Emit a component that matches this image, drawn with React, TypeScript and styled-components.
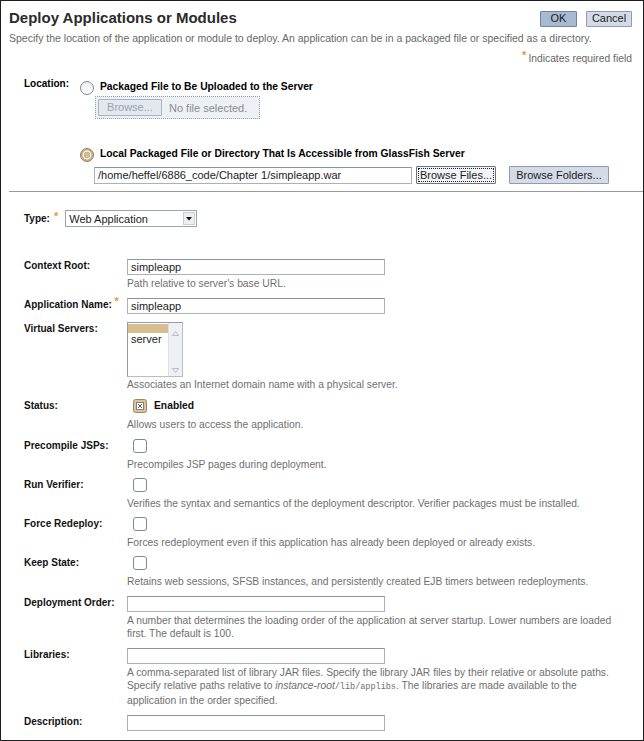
import React from 'react';
import styled, { createGlobalStyle, css } from 'styled-components';

const GlobalStyle = createGlobalStyle`
  html, body { margin: 0; padding: 0; background: #fff; }
  body { font-family: "Liberation Sans", Arial, sans-serif; }
  * { box-sizing: border-box; }
`;

const Page = styled.div`
  width: 644px;
  height: 741px;
  border: 1px solid #1e1e1e;
  background: #fff;
  overflow: hidden;
  color: #000;
  font-family: "Liberation Sans", Arial, sans-serif;
`;

const Header = styled.header`
  padding: 6px 11px 0 8px;
`;

const TitleRow = styled.div`
  display: flex;
  align-items: center;
  justify-content: space-between;
  height: 22px;
`;

const Title = styled.h1`
  margin: 0;
  font-size: 15px;
  line-height: 18px;
  font-weight: bold;
  color: #2b2b2b;
`;

const Actions = styled.div`
  display: flex;
  gap: 9px;
  margin-top: 1px;
`;

type Tone = 'primary' | 'plain' | 'focused' | 'disabled';

const Button = styled.button<{ $tone?: Tone; $w: number; $h?: number; $ml?: number }>`
  width: ${p => p.$w}px;
  height: ${p => p.$h ?? 16}px;
  margin-left: ${p => p.$ml ?? 0}px;
  padding: 0;
  font-family: "Liberation Sans", Arial, sans-serif;
  font-size: 11px;
  line-height: 1;
  color: #1c1c1c;
  border: 1px solid #8e9bb0;
  border-radius: 1px;
  background: #d4dbe6;
  ${p => p.$tone === 'primary' && css`
    background: #a8b9d2;
    border-color: #70849f;
  `}
  ${p => p.$tone === 'focused' && css`
    background: #f2f4f7;
    border: 1px solid #6d7480;
    outline: 1px dotted #222;
    outline-offset: -3px;
  `}
  ${p => p.$tone === 'disabled' && css`
    background: #e3e7ee;
    border-color: #aab3c0;
    color: #9ba2ad;
  `}
`;

const Subtitle = styled.p`
  margin: 3px 0 0;
  font-size: 10.5px;
  line-height: 13px;
  color: #686868;
`;

const RequiredNote = styled.p`
  margin: 7px 0 0;
  text-align: right;
  font-size: 10.3px;
  line-height: 13px;
  color: #686868;
`;

const Star = styled.span<{ $size?: number; $ml?: number }>`
  color: #e39a35;
  font-weight: bold;
  font-size: ${p => p.$size ?? 11}px;
  position: relative;
  top: -3px;
  margin-left: ${p => p.$ml ?? 0}px;
  margin-right: 2px;
`;

const LocationSection = styled.section`
  display: grid;
  grid-template-columns: 56px 1fr;
  margin-top: 15px;
  padding-left: 23px;
`;

const SectionLabel = styled.div`
  font-size: 10px;
  font-weight: bold;
  line-height: 13px;
  margin-top: -3px;
`;

const Options = styled.div`
  display: flex;
  flex-direction: column;
`;

const Option = styled.label<{ $top?: number }>`
  display: flex;
  align-items: flex-start;
  gap: 6px;
  margin-top: ${p => p.$top ?? 0}px;
  font-size: 10.3px;
  font-weight: bold;
  line-height: 13px;
`;

const RadioIcon = styled.svg`
  flex: none;
  margin-top: 1px;
`;

const FileBox = styled.div`
  display: flex;
  align-items: center;
  gap: 7px;
  width: 165px;
  height: 23px;
  margin: 1px 0 0 15px;
  padding: 0 2px;
  border: 1px dotted #8f9fb6;
  background: #edf0f5;
  font-size: 11px;
  color: #8c8c8c;
`;

const PathRow = styled.div`
  display: flex;
  align-items: center;
  margin: 4px 0 0 14px;
  height: 18px;
`;

const TextInput = styled.div<{ $w: number; $h?: number }>`
  width: ${p => p.$w}px;
  height: ${p => p.$h ?? 16}px;
  border: 1px solid #a9b1bd;
  border-top-color: #8b93a0;
  background: #fff;
  font-size: 11px;
  line-height: ${p => (p.$h ?? 16) - 2}px;
  padding: 0 3px;
  color: #222;
  white-space: nowrap;
  overflow: hidden;
`;

const Separator = styled.hr`
  margin: 7px 0 0 8px;
  border: 0;
  border-top: 1px solid #9b9b9b;
  height: 0;
`;

const TypeRow = styled.div`
  display: flex;
  align-items: center;
  margin-top: 18px;
  padding-left: 23px;
  height: 17px;
`;

const Label = styled.div`
  font-size: 10px;
  font-weight: bold;
  line-height: 13px;
  white-space: nowrap;
  color: #111;
`;

const Select = styled.div`
  display: flex;
  align-items: center;
  justify-content: space-between;
  width: 132px;
  height: 17px;
  margin-left: 5px;
  border: 1px solid #9ba4b2;
  background: #fff;
  font-size: 11px;
  padding-left: 3px;
  color: #222;
`;

const SelectArrow = styled.span`
  display: flex;
  align-items: center;
  justify-content: center;
  width: 12px;
  height: 13px;
  margin-right: 1px;
  background: #eceef2;
  border: 1px solid #c8ccd3;
`;

const Form = styled.div`
  margin-top: 32px;
  padding-left: 23px;
`;

const FormRow = styled.div<{ $gap?: number }>`
  display: grid;
  grid-template-columns: 103px 1fr;
  margin-top: ${p => p.$gap ?? 8}px;
  &:first-child { margin-top: 0; }
`;

const Field = styled.div`
  display: flex;
  flex-direction: column;
  align-items: flex-start;
`;

const Help = styled.div<{ $top?: number }>`
  margin-top: ${p => p.$top ?? 2}px;
  font-size: 10.3px;
  line-height: 13px;
  color: #6f6f6f;
  white-space: nowrap;
`;

const Mono = styled.code`
  font-family: "Liberation Mono", "DejaVu Sans Mono", monospace;
  font-size: 8.5px;
`;

const CheckLine = styled.div`
  display: flex;
  align-items: center;
  gap: 7px;
  height: 13px;
  margin-left: 6px;
  font-size: 10.3px;
  font-weight: bold;
  color: #111;
`;

const ListBox = styled.div`
  display: flex;
  width: 56px;
  height: 55px;
  border: 1px solid #8e9bb0;
  border-right-color: #b5bdc8;
  border-bottom-color: #b5bdc8;
  background: #fff;
`;

const ListItems = styled.div`
  flex: 1;
  padding-top: 1px;
  font-size: 11px;
  line-height: 13px;
  color: #222;
`;

const ListItem = styled.div<{ $selected?: boolean }>`
  height: ${p => (p.$selected ? 9 : 13)}px;
  padding-left: 3px;
  ${p => p.$selected && css`background: #d8bd8e;`}
`;

const ScrollBar = styled.div`
  display: flex;
  flex-direction: column;
  justify-content: space-between;
  align-items: center;
  width: 14px;
  padding: 8px 0 3px;
  background: #eef0f3;
  border-left: 1px solid #dde1e6;
`;

const Radio = ({ checked }: { checked?: boolean }) => (
  <RadioIcon width="14" height="14" viewBox="0 0 14 14">
    {checked ? (
      <>
        <circle cx="7" cy="7" r="6.5" fill="#cdb185" stroke="#958262" />
        <circle cx="7" cy="7" r="4.4" fill="#fff" />
        <circle cx="7" cy="7" r="3" fill="#d6bd94" stroke="#b9a07a" strokeWidth="0.6" />
      </>
    ) : (
      <>
        <defs>
          <linearGradient id="rg" x1="0" y1="0" x2="0" y2="1">
            <stop offset="0" stopColor="#e9ecf0" />
            <stop offset="1" stopColor="#ffffff" />
          </linearGradient>
        </defs>
        <circle cx="7" cy="7" r="6.5" fill="url(#rg)" stroke="#858b95" />
      </>
    )}
  </RadioIcon>
);

const CheckBox = ({ checked }: { checked?: boolean }) => (
  <svg width="14" height="14" viewBox="0 0 14 14">
    {checked ? (
      <>
        <rect x="0.5" y="0.5" width="13" height="13" rx="2" fill="#dbc398" stroke="#9c8763" />
        <rect x="3.5" y="3.5" width="7" height="7" fill="#fff" stroke="#7f7f7f" />
        <path d="M5 5 L9 9 M9 5 L5 9" stroke="#555" strokeWidth="1" />
      </>
    ) : (
      <rect x="0.5" y="0.5" width="13" height="13" rx="2.5" fill="#fff" stroke="#7f8896" />
    )}
  </svg>
);

const DownTriangle = () => (
  <svg width="6" height="4" viewBox="0 0 6 4">
    <path d="M0 0 H6 L3 3.5 Z" fill="#111" />
  </svg>
);

const ScrollArrow = ({ up }: { up?: boolean }) => (
  <svg width="7" height="5" viewBox="0 0 7 5">
    <path d={up ? 'M0.5 4.5 L3.5 0.5 L6.5 4.5 Z' : 'M0.5 0.5 L3.5 4.5 L6.5 0.5 Z'} fill="none" stroke="#b8bec7" />
  </svg>
);

export default function App() {
  return (
    <>
      <GlobalStyle />
      <Page>
        <Header>
          <TitleRow>
            <Title>Deploy Applications or Modules</Title>
            <Actions>
              <Button $tone="primary" $w={37}>OK</Button>
              <Button $tone="plain" $w={46}>Cancel</Button>
            </Actions>
          </TitleRow>
          <Subtitle>
            Specify the location of the application or module to deploy. An application can be in a packaged file or specified as a directory.
          </Subtitle>
          <RequiredNote>
            <Star>*</Star>Indicates required field
          </RequiredNote>
        </Header>

        <LocationSection>
          <SectionLabel>Location:</SectionLabel>
          <Options>
            <Option>
              <Radio />
              Packaged File to Be Uploaded to the Server
            </Option>
            <FileBox>
              <Button $tone="disabled" $w={64} $h={17}>Browse...</Button>
              No file selected.
            </FileBox>
            <Option $top={28}>
              <Radio checked />
              Local Packaged File or Directory That Is Accessible from GlassFish Server
            </Option>
            <PathRow>
              <TextInput $w={318} $h={17}>/home/heffel/6886_code/Chapter 1/simpleapp.war</TextInput>
              <Button $tone="focused" $w={80} $h={18} $ml={4}>Browse Files...</Button>
              <Button $tone="plain" $w={100} $h={18} $ml={13}>Browse Folders...</Button>
            </PathRow>
          </Options>
        </LocationSection>

        <Separator />

        <TypeRow>
          <Label>Type:</Label>
          <Star $size={11} $ml={4}>*</Star>
          <Select>
            Web Application
            <SelectArrow><DownTriangle /></SelectArrow>
          </Select>
        </TypeRow>

        <Form>
          <FormRow>
            <Label>Context Root:</Label>
            <Field>
              <TextInput $w={258}>simpleapp</TextInput>
              <Help>Path relative to server's base URL.</Help>
            </Field>
          </FormRow>
          <FormRow $gap={8}>
            <Label>Application Name: <Star>*</Star></Label>
            <Field>
              <TextInput $w={258}>simpleapp</TextInput>
            </Field>
          </FormRow>
          <FormRow $gap={8}>
            <Label>Virtual Servers:</Label>
            <Field>
              <ListBox>
                <ListItems>
                  <ListItem $selected />
                  <ListItem>server</ListItem>
                </ListItems>
                <ScrollBar>
                  <ScrollArrow up />
                  <ScrollArrow />
                </ScrollBar>
              </ListBox>
              <Help $top={1}>Associates an Internet domain name with a physical server.</Help>
            </Field>
          </FormRow>
          <FormRow $gap={8}>
            <Label>Status:</Label>
            <Field>
              <CheckLine><CheckBox checked />Enabled</CheckLine>
              <Help $top={6}>Allows users to access the application.</Help>
            </Field>
          </FormRow>
          <FormRow $gap={8}>
            <Label>Precompile JSPs:</Label>
            <Field>
              <CheckLine><CheckBox /></CheckLine>
              <Help $top={6}>Precompiles JSP pages during deployment.</Help>
            </Field>
          </FormRow>
          <FormRow $gap={7}>
            <Label>Run Verifier:</Label>
            <Field>
              <CheckLine><CheckBox /></CheckLine>
              <Help $top={6}>Verifies the syntax and semantics of the deployment descriptor. Verifier packages must be installed.</Help>
            </Field>
          </FormRow>
          <FormRow $gap={7}>
            <Label>Force Redeploy:</Label>
            <Field>
              <CheckLine><CheckBox /></CheckLine>
              <Help $top={6}>Forces redeployment even if this application has already been deployed or already exists.</Help>
            </Field>
          </FormRow>
          <FormRow $gap={7}>
            <Label>Keep State:</Label>
            <Field>
              <CheckLine><CheckBox /></CheckLine>
              <Help $top={6}>Retains web sessions, SFSB instances, and persistently created EJB timers between redeployments.</Help>
            </Field>
          </FormRow>
          <FormRow $gap={8}>
            <Label>Deployment Order:</Label>
            <Field>
              <TextInput $w={258} />
              <Help>
                A number that determines the loading order of the application at server startup. Lower numbers are loaded
                <br />
                first. The default is 100.
              </Help>
            </Field>
          </FormRow>
          <FormRow $gap={8}>
            <Label>Libraries:</Label>
            <Field>
              <TextInput $w={258} />
              <Help>
                A comma-separated list of library JAR files. Specify the library JAR files by their relative or absolute paths.
                <br />
                Specify relative paths relative to <i>instance-root</i><Mono>/lib/applibs</Mono>. The libraries are made available to the
                <br />
                application in the order specified.
              </Help>
            </Field>
          </FormRow>
          <FormRow $gap={8}>
            <Label>Description:</Label>
            <Field>
              <TextInput $w={258} />
            </Field>
          </FormRow>
        </Form>
      </Page>
    </>
  );
}
